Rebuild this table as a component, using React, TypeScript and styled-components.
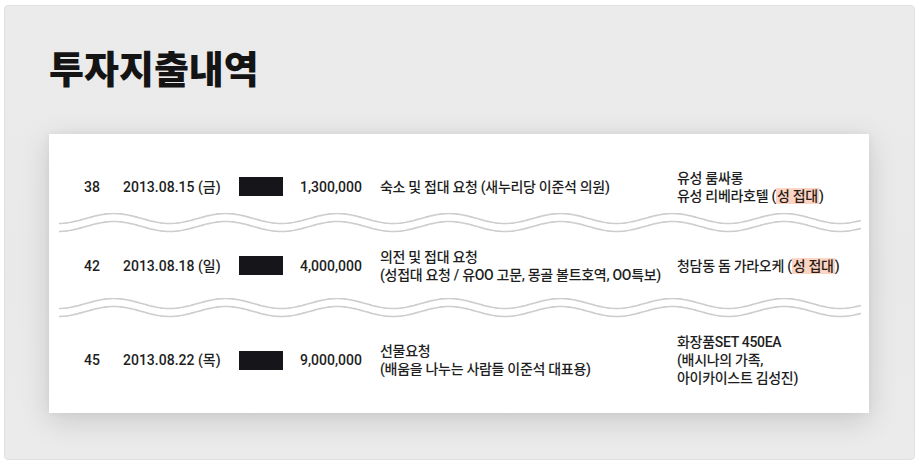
import React from "react";
import styled, { createGlobalStyle } from "styled-components";

const Global = createGlobalStyle`
  html, body { margin: 0; padding: 0; background: #ffffff; }
  body { font-family: Roboto, "Noto Sans CJK KR", sans-serif; color: #1e1e1e; }
`;

const Panel = styled.div`
  margin: 5px 6px 4px 4px;
  height: 455px;
  box-sizing: border-box;
  padding: 38px 45px 0 44px;
  background: linear-gradient(180deg, #ebebeb 0%, #e9e9e9 60%, #ebebeb 100%);
  border: 1px solid #e0e0e0;
  border-radius: 4px;
  display: flex;
  flex-direction: column;
`;

const Title = styled.h1`
  margin: 0;
  height: 90px;
  font-family: "Noto Sans CJK KR", sans-serif;
  font-weight: 900;
  font-size: 38px;
  letter-spacing: 0;
  line-height: 46px;
  color: #141414;
`;

const Card = styled.div`
  background: #ffffff;
  padding: 26px 0 11px 0;
  box-shadow: 0 8px 28px rgba(0, 0, 0, 0.14), 0 0 8px rgba(0, 0, 0, 0.05);
  display: flex;
  flex-direction: column;
`;

const Row = styled.div<{ $h: number }>`
  height: ${(p) => p.$h}px;
  display: grid;
  grid-template-columns: 39px 116px 61px 80px 297px 1fr;
  align-items: center;
  padding-left: 35px;
  font-size: 14px;
  font-weight: 500;
  line-height: 18px;
  color: #1e1e1e;
`;

const Cell = styled.div<{ $tight?: boolean }>`
  white-space: nowrap;
  letter-spacing: ${(p) => (p.$tight ? "-0.3px" : "0")};
`;

const Redact = styled.div`
  width: 44px;
  height: 19px;
  background: #15151a;
`;

const Mark = styled.span`
  background: #fbd4c3;
  color: #2a1d18;
  padding: 0 1px;
`;

const WaveWrap = styled.div`
  height: 20px;
  padding: 0 8px 0 10px;
  display: flex;
`;

function wavePath(width: number, cy: number, amp: number, wl: number, peak: number) {
  const pts: string[] = [];
  for (let x = 0; x <= width; x += 2) {
    const y = cy - amp * Math.cos((2 * Math.PI * (x - peak)) / wl);
    pts.push(`${x === 0 ? "M" : "L"}${x.toFixed(1)},${y.toFixed(2)}`);
  }
  return pts.join(" ");
}

const Wave = () => {
  const w = 804;
  return (
    <WaveWrap>
      <svg width={w} height={20} viewBox={`0 0 ${w} 20`}>
        <path d={wavePath(w, 5.5, 5, 112, 55)} fill="none" stroke="#cdcdcd" strokeWidth={1.6} />
        <path d={wavePath(w, 13.5, 5, 112, 55)} fill="none" stroke="#cdcdcd" strokeWidth={1.6} />
      </svg>
    </WaveWrap>
  );
};

export default function App() {
  return (
    <>
      <Global />
      <Panel>
        <Title>투자지출내역</Title>
        <Card>
          <Row $h={53}>
            <Cell>38</Cell>
            <Cell>2013.08.15 (금)</Cell>
            <Redact />
            <Cell>1,300,000</Cell>
            <Cell $tight>숙소 및 접대 요청 (새누리당 이준석 의원)</Cell>
            <Cell $tight>
              유성 룸싸롱
              <br />
              유성 리베라호텔 (<Mark>성 접대</Mark>)
            </Cell>
          </Row>
          <Wave />
          <Row $h={65}>
            <Cell>42</Cell>
            <Cell>2013.08.18 (일)</Cell>
            <Redact />
            <Cell>4,000,000</Cell>
            <Cell $tight>
              의전 및 접대 요청
              <br />
              (성접대 요청 / 유OO 고문, 몽골 볼트호역, OO특보)
            </Cell>
            <Cell $tight>
              청담동 돔 가라오케 (<Mark>성 접대</Mark>)
            </Cell>
          </Row>
          <Wave />
          <Row $h={84}>
            <Cell>45</Cell>
            <Cell>2013.08.22 (목)</Cell>
            <Redact />
            <Cell>9,000,000</Cell>
            <Cell $tight>
              선물요청
              <br />
              (배움을 나누는 사람들 이준석 대표용)
            </Cell>
            <Cell $tight>
              화장품SET 450EA
              <br />
              (배시나의 가족,
              <br />
              아이카이스트 김성진)
            </Cell>
          </Row>
        </Card>
      </Panel>
    </>
  );
}
